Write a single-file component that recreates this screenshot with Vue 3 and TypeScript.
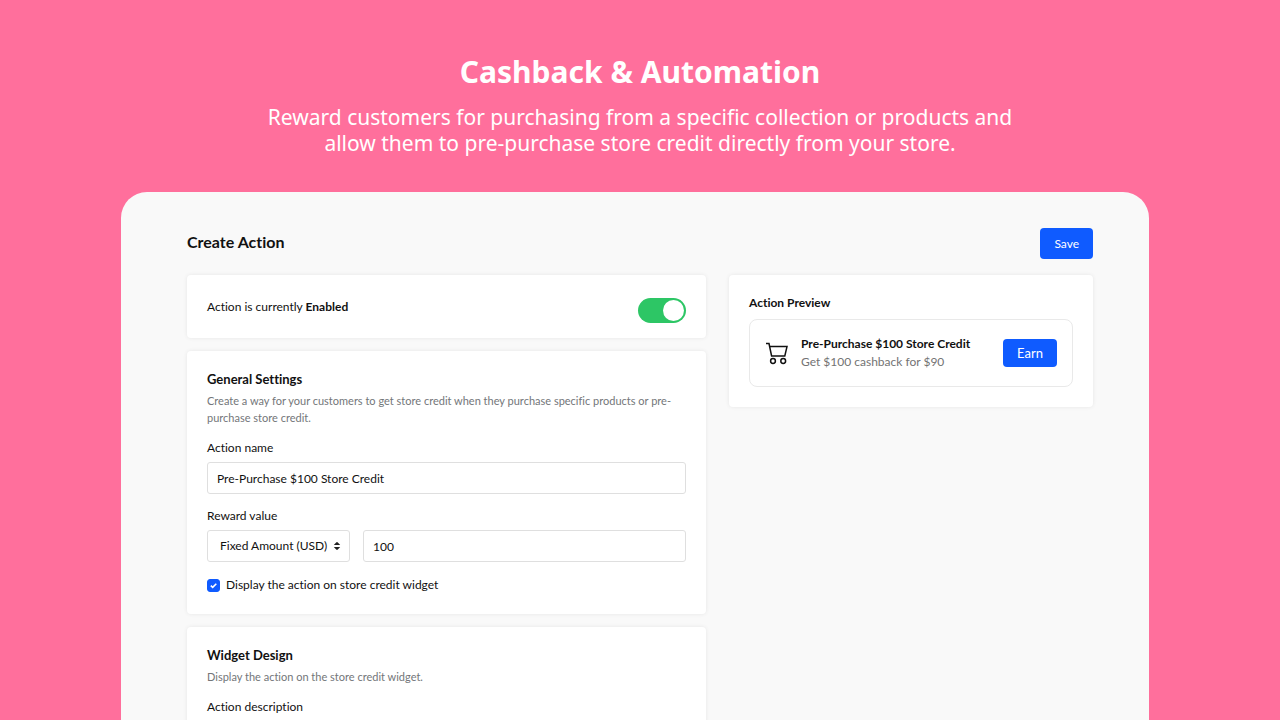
<script setup lang="ts">
import { ref } from 'vue'

const enabled = ref(true)
const actionName = ref('Pre-Purchase $100 Store Credit')
const rewardType = ref('fixed')
const rewardValue = ref('100')
const showOnWidget = ref(true)
const description = ref('Get $100 cashback for $90')
</script>

<template>
  <div class="page">
    <header class="hero">
      <h1>Cashback &amp; Automation</h1>
      <p>
        Reward customers for purchasing from a specific collection or products and<br />
        allow them to pre-purchase store credit directly from your store.
      </p>
    </header>

    <main class="panel">
      <div class="toolbar">
        <h2>Create Action</h2>
        <button type="button" class="btn save">Save</button>
      </div>

      <div class="columns">
        <form class="column" @submit.prevent>
          <section class="card status">
            <label for="enabled">Action is currently <strong>{{ enabled ? 'Enabled' : 'Disabled' }}</strong></label>
            <input id="enabled" v-model="enabled" type="checkbox" role="switch" class="switch" />
          </section>

          <section class="card">
            <h3>General Settings</h3>
            <p class="hint">
              Create a way for your customers to get store credit when they purchase specific products or pre-purchase
              store credit.
            </p>
            <label class="label" for="name">Action name</label>
            <input id="name" v-model="actionName" type="text" class="field" />
            <label class="label" for="value">Reward value</label>
            <div class="reward">
              <div class="select">
                <select id="type" v-model="rewardType" class="field" aria-label="Reward type">
                  <option value="fixed">Fixed Amount (USD)</option>
                  <option value="percent">Percentage</option>
                </select>
                <svg viewBox="0 0 8 10" aria-hidden="true">
                  <path d="M.8 4 3.2 1.4Q4 .6 4.8 1.4L7.2 4zM.8 6 3.2 8.6Q4 9.4 4.8 8.6L7.2 6z" />
                </svg>
              </div>
              <input id="value" v-model="rewardValue" type="text" class="field" />
            </div>
            <label class="check">
              <input v-model="showOnWidget" type="checkbox" />
              <svg viewBox="0 0 13 13" aria-hidden="true"><path d="M3.8 6.6 5.7 8.4 9.3 4.8" /></svg>
              <span>Display the action on store credit widget</span>
            </label>
          </section>

          <section class="card">
            <h3>Widget Design</h3>
            <p class="hint">Display the action on the store credit widget.</p>
            <label class="label" for="description">Action description</label>
            <input id="description" v-model="description" type="text" class="field" />
          </section>
        </form>

        <aside class="card preview">
          <h3>Action Preview</h3>
          <div class="offer">
            <svg class="cart" viewBox="0 0 24 24" aria-hidden="true">
              <path d="M1 2.6H4L6.6 15H19.8L22 5.6H4.7" />
              <circle cx="8" cy="20" r="2.4" />
              <circle cx="18.2" cy="20" r="2.4" />
            </svg>
            <div class="offer-text">
              <strong>{{ actionName }}</strong>
              <span>{{ description }}</span>
            </div>
            <button type="button" class="btn earn">Earn</button>
          </div>
        </aside>
      </div>
    </main>
  </div>
</template>

<style>
body {
  background: #ff6f9c;
}
</style>

<style scoped>
* {
  box-sizing: border-box;
}

.page {
  display: flex;
  flex-direction: column;
  height: 100vh;
  overflow: hidden;
  background: #ff6f9c;
  color: #111;
  font: 12px/18px Lato, "Liberation Sans", sans-serif;
  font-variant-ligatures: none;
}

h1,
h2,
h3,
p {
  margin: 0;
}

.hero {
  padding: 50px 20px 36px;
  color: #fff;
  font-family: "Noto Sans", "Open Sans", sans-serif;
  text-align: center;
}

.hero h1 {
  font-size: 30px;
  line-height: 44px;
}

.hero p {
  margin-top: 10px;
  font-size: 21px;
  line-height: 26px;
}

.panel {
  flex: 1 0 auto;
  margin: 0 131px 0 121px;
  padding: 36px 56px 20px 66px;
  border-radius: 26px 26px 0 0;
  background: #f9f9f9;
}

.toolbar {
  display: flex;
  align-items: flex-start;
  justify-content: space-between;
  margin-bottom: 16px;
}

.toolbar h2 {
  font-size: 16px;
  line-height: 28px;
}

.btn {
  padding: 0 14px;
  border: 0;
  border-radius: 4px;
  background: #0f5bff;
  color: #fff;
  font-family: inherit;
}

.save {
  height: 31px;
  font-size: 12px;
}

.earn {
  height: 28px;
  font-size: 13px;
}

.columns {
  display: grid;
  grid-template-columns: 519fr 364fr;
  align-items: start;
  gap: 23px;
}

.column {
  display: grid;
  gap: 13px;
}

.card {
  padding: 19px 20px 20px;
  border-radius: 4px;
  background: #fff;
  box-shadow: 0 0 4px rgba(0, 0, 0, 0.08);
}

.status {
  display: flex;
  justify-content: space-between;
  padding: 23px 20px 15px;
}

.switch {
  appearance: none;
  display: flex;
  width: 48px;
  height: 25px;
  margin: 0;
  padding: 2px;
  border-radius: 13px;
  background: #ccc;
}

.switch::before {
  content: "";
  width: 21px;
  height: 21px;
  border-radius: 50%;
  background: #fff;
}

.switch:checked {
  justify-content: flex-end;
  background: #2dc665;
}

h3 {
  font-size: 13px;
  line-height: 18px;
}

.preview h3 {
  font-size: 12px;
}

.hint {
  margin-top: 4px;
  color: #737679;
  font-size: 11px;
  line-height: 17px;
}

.label {
  display: block;
  margin: 13px 0 5px;
}

.field {
  display: block;
  width: 100%;
  height: 32px;
  padding: 0 9px;
  border: 1px solid #dfdfdf;
  border-radius: 3px;
  background: #fff;
  color: #111;
  font: inherit;
}

.reward {
  display: grid;
  grid-template-columns: 143px 1fr;
  gap: 13px;
}

.select {
  display: grid;
  align-items: center;
}

.select > * {
  grid-area: 1 / 1;
}

.select .field {
  appearance: none;
  padding: 0 12px;
}

.select svg {
  justify-self: end;
  width: 8px;
  height: 10px;
  margin-right: 9px;
  fill: #222;
  pointer-events: none;
}

.check {
  display: grid;
  grid-template-columns: 13px 1fr;
  align-items: center;
  column-gap: 6px;
  margin-top: 14px;
}

.check input,
.check svg {
  grid-area: 1 / 1;
  width: 13px;
  height: 13px;
  margin: 0;
}

.check input {
  appearance: none;
  border: 1px solid #ccc;
  border-radius: 3px;
}

.check input:checked {
  border-color: #0f5bff;
  background: #0f5bff;
}

.check svg {
  fill: none;
  stroke: #fff;
  stroke-width: 1.6;
  pointer-events: none;
}

.offer {
  display: flex;
  align-items: center;
  margin-top: 7px;
  padding: 15px;
  border: 1px solid #e9e9e9;
  border-radius: 8px;
}

.cart {
  flex: none;
  width: 24px;
  height: 24px;
  margin-right: 12px;
  fill: none;
  stroke: #111;
  stroke-width: 1.5;
}

.offer-text {
  display: grid;
  flex: 1;
}

.offer-text span {
  color: #737373;
}
</style>
